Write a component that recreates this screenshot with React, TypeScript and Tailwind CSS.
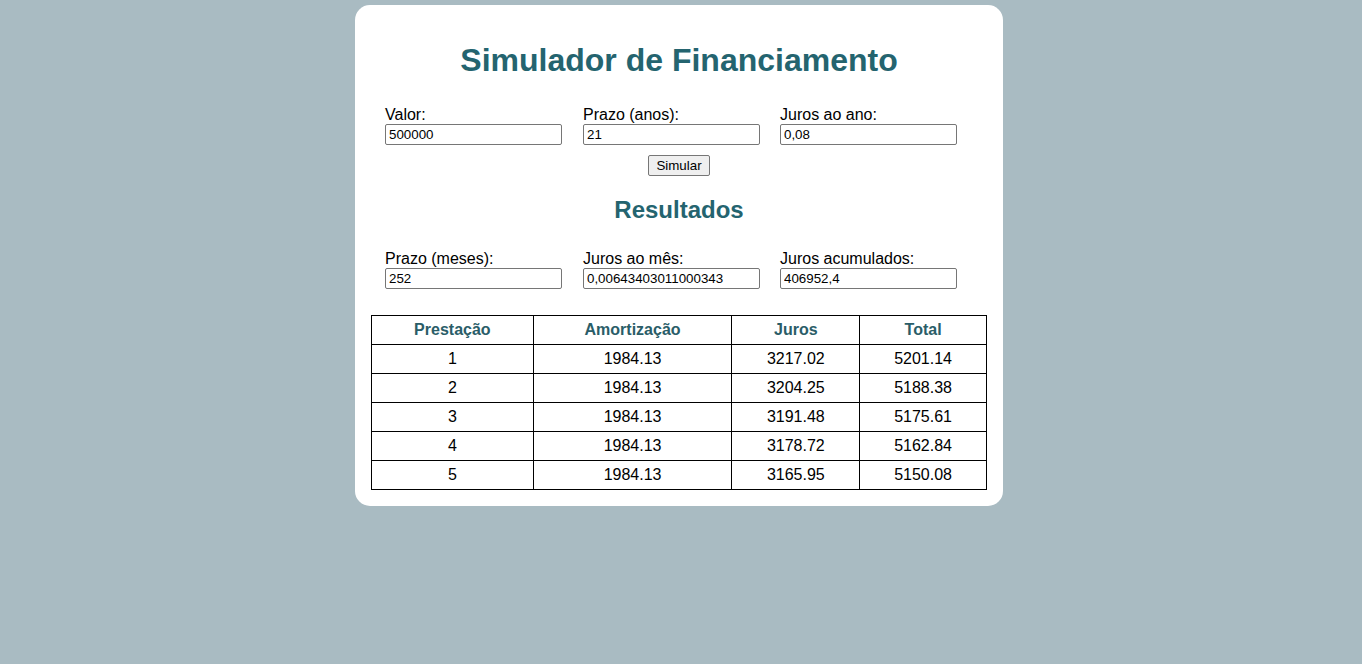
import { useState } from 'react'

const rows = [
  ['1', '1984.13', '3217.02', '5201.14'],
  ['2', '1984.13', '3204.25', '5188.38'],
  ['3', '1984.13', '3191.48', '5175.61'],
  ['4', '1984.13', '3178.72', '5162.84'],
  ['5', '1984.13', '3165.95', '5150.08'],
]

function Field({ label, value, className = '' }: { label: string; value: string; className?: string }) {
  return (
    <div className={`flex flex-col w-[177px] ${className}`}>
      <label className="text-[16px] leading-[18px] text-black">{label}</label>
      <input
        type="text"
        defaultValue={value}
        className="h-[21px] w-[177px] px-[3px] text-[13.33px] text-black border border-[#767676] rounded-[2px] bg-white outline-none"
      />
    </div>
  )
}

export default function App() {
  const [valor] = useState('500000')

  return (
    <div className="min-h-[664px] bg-[#a9bbc2] pt-[5px] pr-[4px] flex justify-center items-start font-['Liberation_Sans',Arial,sans-serif]">
      <div className="w-[648px] bg-white rounded-[15px] p-4">
        <h1 className="text-center text-[32px] leading-[37px] font-bold text-[#24646f] mt-[21px] mb-[27px]">
          Simulador de Financiamento
        </h1>

        <div className="flex pl-[14px]">
          <Field label="Valor:" value={valor} />
          <Field label="Prazo (anos):" value="21" className="ml-[21px]" />
          <Field label="Juros ao ano:" value="0,08" className="ml-[20px]" />
        </div>

        <div className="flex justify-center mt-[10px]">
          <button className="h-[21px] px-[7px] text-[13.33px] text-black bg-[#efefef] border border-[#767676] rounded-[2px]">
            Simular
          </button>
        </div>

        <h2 className="text-center text-[24px] leading-[28px] font-bold text-[#24646f] mt-[20px] mb-[26px]">
          Resultados
        </h2>

        <div className="flex pl-[14px]">
          <Field label="Prazo (meses):" value="252" />
          <Field label="Juros ao mês:" value="0,00643403011000343" className="ml-[21px]" />
          <Field label="Juros acumulados:" value="406952,4" className="ml-[20px]" />
        </div>

        <table className="mt-[26px] w-full border-collapse border border-black text-[16px] text-black">
          <thead>
            <tr className="h-[29px]">
              <th className="w-[162px] border border-black font-bold text-[#2a5d68]">Prestação</th>
              <th className="w-[199px] border border-black font-bold text-[#2a5d68]">Amortização</th>
              <th className="w-[128px] border border-black font-bold text-[#2a5d68]">Juros</th>
              <th className="w-[127px] border border-black font-bold text-[#2a5d68]">Total</th>
            </tr>
          </thead>
          <tbody>
            {rows.map(r => (
              <tr key={r[0]} className="h-[29px]">
                {r.map((c, i) => (
                  <td key={i} className="border border-black text-center">{c}</td>
                ))}
              </tr>
            ))}
          </tbody>
        </table>
      </div>
    </div>
  )
}
